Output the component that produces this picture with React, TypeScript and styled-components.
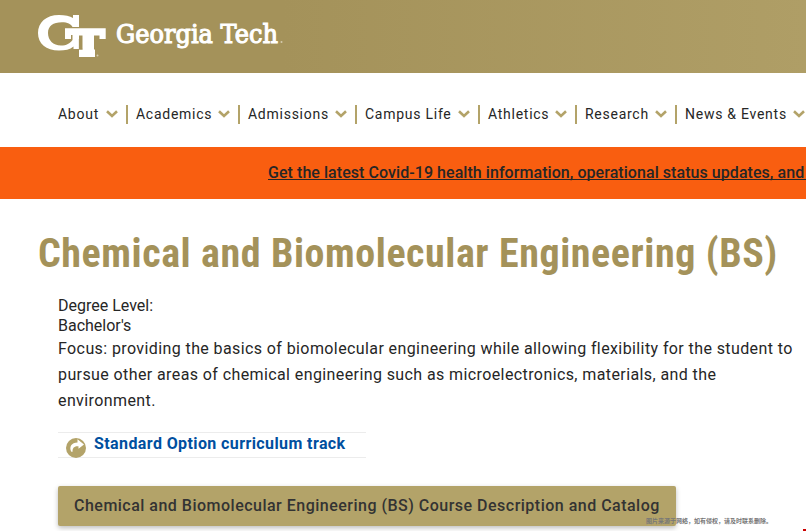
import React from 'react';
import styled, { createGlobalStyle } from 'styled-components';

const Global = createGlobalStyle`
  * { box-sizing: border-box; }
  html, body { margin: 0; padding: 0; }
  body { background: #fff; color: #262626; font-family: Roboto, "Liberation Sans", sans-serif; overflow: hidden; }
`;
const Page = styled.div`
  position: relative;
  width: 806px;
  height: 531px;
  overflow: hidden;
  background: #fff;
`;
const Header = styled.header`
  height: 73px;
  padding: 10px 0 0 34px;
  background: linear-gradient(90deg, #a4925a 0%, #a4925a 35%, #af9e66 100%);
`;
const Logo = styled.svg`
  display: block;
  width: 256px;
  height: 50px;
`;
const Nav = styled.nav`
  display: flex;
  align-items: center;
  height: 74px;
  padding: 8px 0 0 58px;
`;
const NavItem = styled.a<{ $width: number }>`
  display: flex;
  flex: none;
  align-items: center;
  justify-content: space-between;
  width: ${(p) => p.$width}px;
  height: 19px;
  padding-right: 8.5px;
  margin-right: 8px;
  border-right: 2px solid #b3a369;
  font-size: 14px;
  line-height: 19px;
  letter-spacing: 0.74px;
  white-space: nowrap;
`;
const Chevron = styled.svg`
  width: 12px;
  height: 8px;
  flex: none;
`;
const Alert = styled.div`
  height: 52px;
  padding-left: 268px;
  background: #f95e10;
  font-size: 16px;
  font-weight: 500;
  line-height: 51px;
  letter-spacing: 0.056px;
  white-space: nowrap;
`;
const AlertLink = styled.a`
  white-space: pre;
  text-decoration: underline;
  text-decoration-skip-ink: none;
`;
const Title = styled.h1`
  margin: 29px 0 0 38px;
  color: #a4925a;
  font-family: "Roboto Condensed", Roboto, sans-serif;
  font-size: 40px;
  font-stretch: 75%;
  font-weight: 700;
  line-height: 52px;
  letter-spacing: 0.57px;
  white-space: nowrap;
`;
const Content = styled.main`
  padding: 16px 0 0 58px;
`;
const Degree = styled.div`
  font-size: 16px;
  line-height: 20px;
`;
const Summary = styled.p`
  margin: 0;
  font-size: 16px;
  line-height: 26px;
  letter-spacing: 0.4px;
  white-space: nowrap;
`;
const Track = styled.div`
  display: flex;
  align-items: center;
  width: 308px;
  height: 26px;
  margin-top: 18px;
  padding-left: 8px;
  border-top: 1px solid #ececec;
  border-bottom: 1px solid #ececec;
`;
const TrackIcon = styled.svg`
  flex: none;
  width: 20px;
  height: 20px;
  margin: 6px 8px 0 0;
`;
const TrackLink = styled.a`
  margin-top: -3px;
  color: #004f9f;
  font-size: 16px;
  font-weight: 700;
  line-height: 20px;
  letter-spacing: 0.4px;
  white-space: nowrap;
`;
const CatalogButton = styled.a`
  display: block;
  width: 618px;
  height: 40px;
  margin-top: 28px;
  padding-left: 16px;
  border-radius: 2px;
  background: #b3a369;
  box-shadow: 0 2px 5px rgba(0, 0, 0, 0.26);
  color: #333;
  font-size: 16px;
  font-weight: 500;
  line-height: 39px;
  letter-spacing: 0.49px;
  white-space: nowrap;
`;
const Credit = styled.small`
  position: absolute;
  left: 646px;
  top: 516px;
  color: #777;
  font-family: "Noto Sans CJK SC", sans-serif;
  font-size: 6px;
  font-weight: 700;
  line-height: 10px;
  white-space: nowrap;
`;
const CornerMark = styled.i`
  position: absolute;
  right: 0;
  bottom: 0;
  width: 3px;
  height: 2px;
  background: #c00;
`;

const menu = [
  { label: 'About', width: 70 },
  { label: 'Academics', width: 104 },
  { label: 'Admissions', width: 109 },
  { label: 'Campus Life', width: 115 },
  { label: 'Athletics', width: 89 },
  { label: 'Research', width: 92 },
  { label: 'News & Events', width: 130 },
];

export default function App() {
  return (
    <>
      <Global />
      <Page>
        <Header>
          <Logo viewBox="34 10 256 50" aria-label="Georgia Tech">
            <path
              fill="#fff"
              d="M73 18V15H79V27H72.500C71 24 67.500 22.200 62 22.200C53 22.200 48 26 48 33C48 40 53 45.500 61 45.500C66.500 45.500 70 43.500 72.500 40V35H79V49H73.500V46.500C70 49.500 65 50.500 59 50.500C46 50.500 38 43.500 38 33C38 22.500 46 15 59 15C65 15 70 16 73 18Z"
            />
            <path
              fill="#fff"
              d="M65 28.300H105.700V39H99.500V35.500H94V49.500H95V57H79V49.500H82.500V35.500H79V39H78V35H71V39H65Z"
            />
            <path d="M79.300 39V49.200H82.500" fill="none" stroke="#a4925a" strokeWidth="0.700" />
            <circle cx="97.500" cy="55.500" r="1" fill="#d5cbae" />
            <text x="116" y="43" textLength="162" lengthAdjust="spacingAndGlyphs" fill="#fff" stroke="#fff" strokeWidth="1.100" strokeLinejoin="miter" fontFamily="'Roboto Slab', 'DejaVu Serif', serif" fontWeight="400" fontSize="25.500">
              Georgia Tech
            </text>
            <circle cx="281.500" cy="42" r="1" fill="#d5cbae" />
          </Logo>
        </Header>
        <Nav>
          {menu.map((item) => (
            <NavItem key={item.label} $width={item.width}>
              {item.label}
              <Chevron viewBox="0 0 12 8">
                <path d="M1 1.300L6 6L11 1.300" fill="none" stroke="#b3a369" strokeWidth="2.600" />
              </Chevron>
            </NavItem>
          ))}
        </Nav>
        <Alert>
          <AlertLink>{'Get the latest Covid-19 health information, operational status updates, and '}</AlertLink>
        </Alert>
        <Title>Chemical and Biomolecular Engineering (BS)</Title>
        <Content>
          <Degree>Degree Level:</Degree>
          <Degree>Bachelor's</Degree>
          <Summary>
            Focus: providing the basics of biomolecular engineering while allowing flexibility for the student to
            <br />
            pursue other areas of chemical engineering such as microelectronics, materials, and the
            <br />
            environment.
          </Summary>
          <Track>
            <TrackIcon viewBox="0 0 20 20">
              <circle cx="10" cy="10" r="10" fill="#b3a369" />
              <path d="M5.300 13.800C2.800 9 5.500 4.600 11.500 4.600V1.300L18 6.500L12.500 10.800V8.300C8 7.800 6.300 10.300 6.600 13.800Z" fill="#fff" />
            </TrackIcon>
            <TrackLink>Standard Option curriculum track</TrackLink>
          </Track>
          <CatalogButton>Chemical and Biomolecular Engineering (BS) Course Description and Catalog</CatalogButton>
        </Content>
        <Credit>图片来源于网络，如有侵权，请及时联系删除。</Credit>
        <CornerMark />
      </Page>
    </>
  );
}
